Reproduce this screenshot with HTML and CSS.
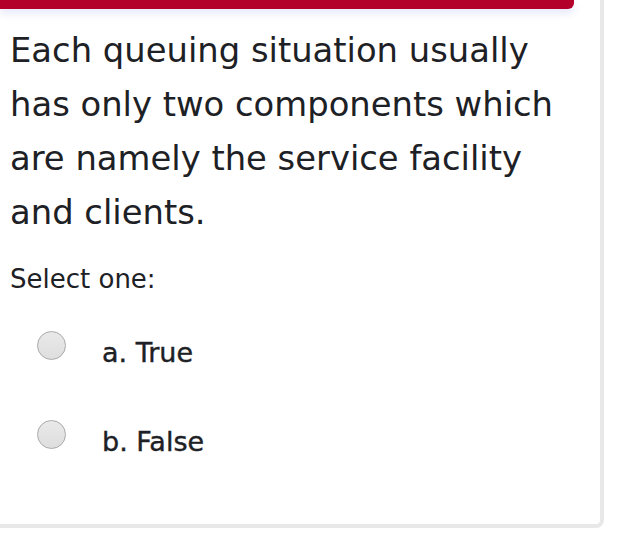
FILE: index.html
```html
<!DOCTYPE html>
<html lang="en">
<head>
    <meta charset="UTF-8">
    <title>Question</title>
    <link rel="stylesheet" href="styles.css">
</head>
<body>
<div id="que" class="que">
    <div class="que-bar"></div>
    <div class="content">
        <div class="qtext">Each queuing situation usually has only two components which are namely the service facility and clients.</div>
        <div class="prompt">Select one:</div>
        <div class="answer">
            <label class="option">
                <span class="radio"></span>
                <span class="ans-label">a. True</span>
            </label>
            <label class="option">
                <span class="radio"></span>
                <span class="ans-label">b. False</span>
            </label>
        </div>
    </div>
</div>
</body>
</html>
```
FILE: styles.css
```css
*{
    margin: 0;
    padding: 0;
}

body{
    background: #fff;
    font-family: "DejaVu Sans", sans-serif;
    color: #1d2125;
}

.que{
    width: 600px;
    height: 524px;
    border-right: 4px solid #e8e8e8;
    border-bottom: 4px solid #e8e8e8;
    border-bottom-right-radius: 8px;
}

.que-bar{
    width: 574px;
    height: 9px;
    background: #b3002b;
    border-bottom-right-radius: 6px;
    box-shadow: 0 3px 10px rgba(70, 90, 230, 0.18);
}

.content{
    padding: 15px 20px 0 10px;
}

.qtext{
    font-size: 33.8px;
    line-height: 54px;
}

.prompt{
    font-size: 26px;
    margin-top: 24px;
}

.answer{
    margin-top: 37px;
}

.option{
    display: flex;
    align-items: flex-start;
    height: 89px;
}

.radio{
    width: 27px;
    height: 27px;
    border: 1px solid #a9a9a9;
    border-radius: 50%;
    background: linear-gradient(#e9e9e9, #dedede);
    margin-left: 27px;
}

.ans-label{
    font-size: 27px;
    margin-left: 36px;
    margin-top: 6px;
    -webkit-text-stroke: 0.4px #1d2125;
}
```
